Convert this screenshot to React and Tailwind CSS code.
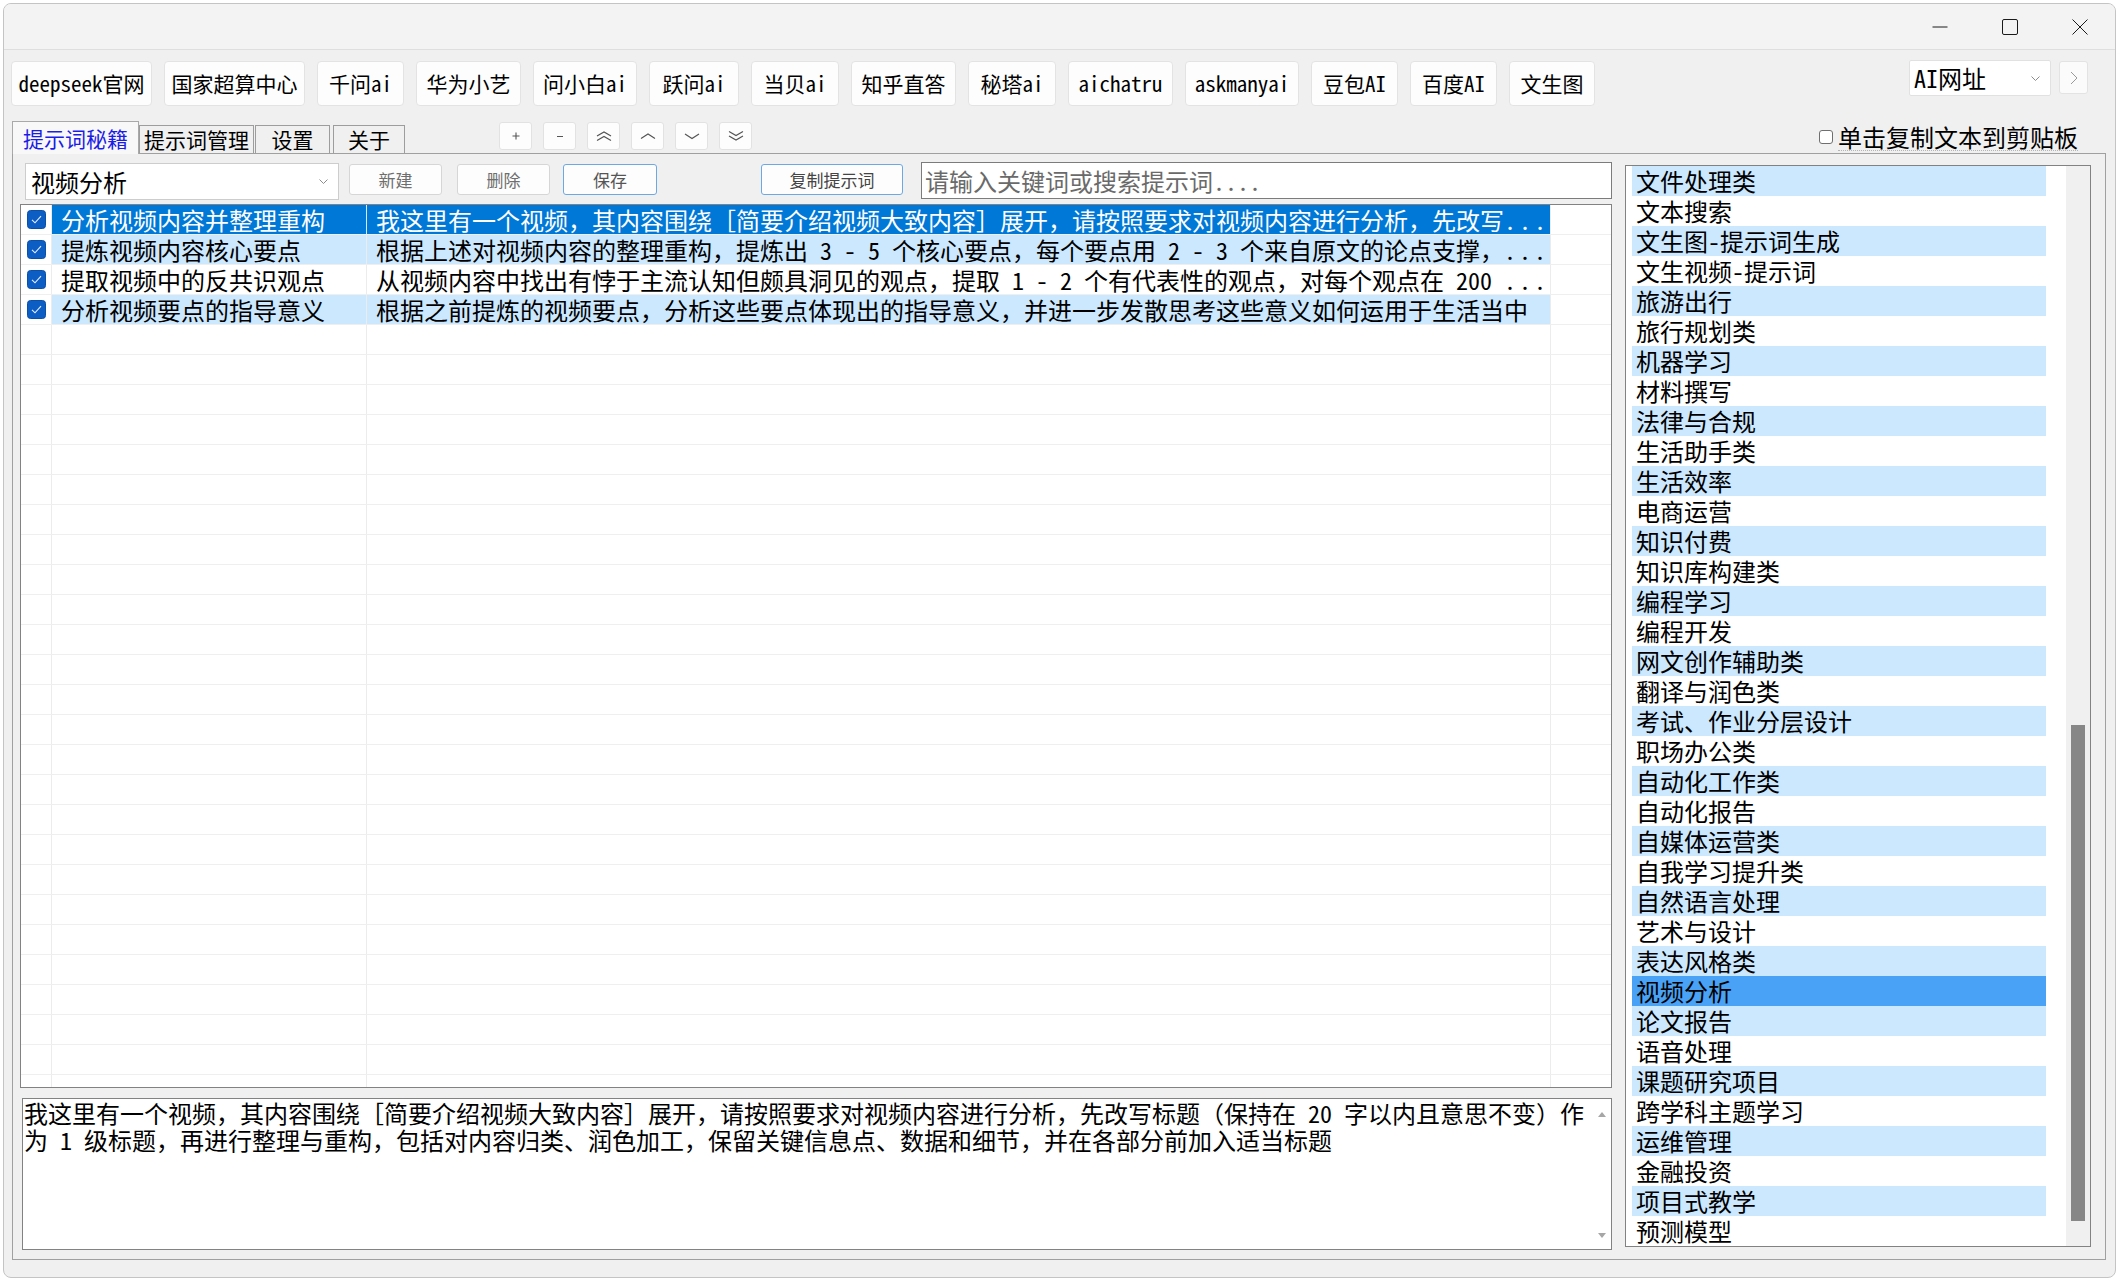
import React from 'react';

const sites = [
    { name: 'deepseek官网', w: 'w-[141px]' },
    { name: '国家超算中心', w: 'w-[141px]' },
    { name: '千问ai', w: 'w-[87px]' },
    { name: '华为小艺', w: 'w-[105px]' },
    { name: '问小白ai', w: 'w-[104px]' },
    { name: '跃问ai', w: 'w-[90px]' },
    { name: '当贝ai', w: 'w-[88px]' },
    { name: '知乎直答', w: 'w-[105px]' },
    { name: '秘塔ai', w: 'w-[88px]' },
    { name: 'aichatru', w: 'w-[105px]' },
    { name: 'askmanyai', w: 'w-[114px]' },
    { name: '豆包AI', w: 'w-[87px]' },
    { name: '百度AI', w: 'w-[87px]' },
    { name: '文生图', w: 'w-[86px]' },
];

const prompts = [
    { title: '分析视频内容并整理重构', body: '我这里有一个视频，其内容围绕［简要介绍视频大致内容］展开，请按照要求对视频内容进行分析，先改写', more: true },
    { title: '提炼视频内容核心要点', body: '根据上述对视频内容的整理重构，提炼出 3 - 5 个核心要点，每个要点用 2 - 3 个来自原文的论点支撑，', more: true },
    { title: '提取视频中的反共识观点', body: '从视频内容中找出有悖于主流认知但颇具洞见的观点，提取 1 - 2 个有代表性的观点，对每个观点在 200 ', more: true },
    { title: '分析视频要点的指导意义', body: '根据之前提炼的视频要点，分析这些要点体现出的指导意义，并进一步发散思考这些意义如何运用于生活当中' },
];

const categories = [
    '文件处理类', '文本搜索', '文生图-提示词生成', '文生视频-提示词', '旅游出行', '旅行规划类',
    '机器学习', '材料撰写', '法律与合规', '生活助手类', '生活效率', '电商运营',
    '知识付费', '知识库构建类', '编程学习', '编程开发', '网文创作辅助类', '翻译与润色类',
    '考试、作业分层设计', '职场办公类', '自动化工作类', '自动化报告', '自媒体运营类', '自我学习提升类',
    '自然语言处理', '艺术与设计', '表达风格类', '视频分析', '论文报告', '语音处理',
    '课题研究项目', '跨学科主题学习', '运维管理', '金融投资', '项目式教学', '预测模型',
];

function SmallChevron() {
    return (
        <svg width="9" height="5" viewBox="0 0 9 5">
            <polyline points="0.5,0.5 4.5,4.5 8.5,0.5" fill="none" stroke="#8c8c8c" strokeWidth="1" />
        </svg>
    );
}

function MoveIcon({ kind }) {
    const line = (pts) => <polyline points={pts} fill="none" stroke="#555" strokeWidth="1.2" />;
    return (
        <svg width="18" height="12" viewBox="0 0 18 12">
            {kind === 'plus' && (
                <>
                    <line x1="5.5" y1="6" x2="12.5" y2="6" stroke="#555" strokeWidth="1.1" />
                    <line x1="9" y1="2.5" x2="9" y2="9.5" stroke="#555" strokeWidth="1.1" />
                </>
            )}
            {kind === 'minus' && <line x1="6" y1="6.5" x2="12" y2="6.5" stroke="#555" strokeWidth="1.1" />}
            {kind === 'top' && (
                <>
                    {line('2,6 9,2 16,6')}
                    {line('2,10.5 9,6.5 16,10.5')}
                </>
            )}
            {kind === 'up' && line('2,8.5 9,4 16,8.5')}
            {kind === 'down' && line('2,4 9,8.5 16,4')}
            {kind === 'bottom' && (
                <>
                    {line('2,1.5 9,5.5 16,1.5')}
                    {line('2,6 9,10 16,6')}
                </>
            )}
        </svg>
    );
}

function RowCheck() {
    return (
        <svg width="19" height="19" viewBox="0 0 19 19">
            <rect x="0.5" y="0.5" width="18" height="18" rx="3" fill="#0c5ec4" stroke="#0a4fa8" />
            <polyline points="5,9.8 8,12.8 14,6.2" fill="none" stroke="#e8f1ff" strokeWidth="1.1" />
        </svg>
    );
}

export default function App() {
    return (
        <div className="w-[2119px] h-[1281px] bg-white p-[3px] font-['Noto_Sans_Mono_CJK_SC','Noto_Sans_CJK_SC',sans-serif] text-black">
            <div className="w-[2113px] h-[1275px] rounded-[8px] border border-[#c4c4c4] bg-[#f0f0f0] overflow-hidden flex flex-col">
                {/* Title bar */}
                <div className="h-[46px] shrink-0 border-b border-[#dedede] bg-[#f3f3f3] flex justify-end">
                    <div className="w-[70px] flex items-center justify-center">
                        <svg width="16" height="16" viewBox="0 0 16 16">
                            <line x1="0.5" y1="8" x2="15.5" y2="8" stroke="#1a1a1a" strokeWidth="1" />
                        </svg>
                    </div>
                    <div className="w-[70px] flex items-center justify-center">
                        <svg width="16" height="16" viewBox="0 0 16 16">
                            <rect x="0.5" y="0.5" width="15" height="15" rx="1.5" fill="none" stroke="#1a1a1a" strokeWidth="1" />
                        </svg>
                    </div>
                    <div className="w-[70px] flex items-center justify-center">
                        <svg width="16" height="16" viewBox="0 0 16 16">
                            <line x1="0.5" y1="0.5" x2="15.5" y2="15.5" stroke="#1a1a1a" strokeWidth="1" />
                            <line x1="15.5" y1="0.5" x2="0.5" y2="15.5" stroke="#1a1a1a" strokeWidth="1" />
                        </svg>
                    </div>
                </div>

                {/* Site buttons */}
                <div className="h-[71px] shrink-0 pt-[11px] pl-[7px] pr-[27px] flex items-start">
                    <div className="flex gap-[12px]">
                        {sites.map((s) => (
                            <div key={s.name} className={`${s.w} h-[45px] rounded-[4px] border border-[#e3e3e3] bg-[#fdfdfd] flex items-center justify-center text-[21px] leading-none whitespace-nowrap`}>
                                {s.name}
                            </div>
                        ))}
                    </div>
                    <div className="ml-auto flex items-start gap-[8px]">
                        <div className="-mt-[1px] w-[142px] h-[36px] rounded-[2px] border border-[#e1e1e1] bg-white flex items-center pl-[4px] pr-[10px]">
                            <span className="text-[24px] leading-none">AI网址</span>
                            <span className="ml-auto"><SmallChevron /></span>
                        </div>
                        <div className="w-[29px] h-[33px] rounded-[3px] border border-[#e3e3e3] bg-[#fbfbfb] flex items-center justify-center">
                            <svg width="8" height="14" viewBox="0 0 8 14">
                                <polyline points="1,1 7,7 1,13" fill="none" stroke="#9a9a9a" strokeWidth="1" />
                            </svg>
                        </div>
                    </div>
                </div>

                {/* Tabs row */}
                <div className="h-[32px] shrink-0 pl-[8px] pr-[37px] flex items-start relative z-10">
                    <div className="w-[127px] h-[33px] border border-b-0 border-[#a9a9a9] bg-[#f8f8f8] flex items-center justify-center text-[21px] leading-none text-[#1c1ce8]">
                        提示词秘籍
                    </div>
                    <div className="mt-[4px] w-[115px] h-[28px] border border-b-0 border-[#9d9d9d] bg-[#f0f0f0] flex items-center justify-center text-[21px] leading-none">
                        提示词管理
                    </div>
                    <div className="mt-[4px] ml-[1px] w-[75px] h-[28px] border border-b-0 border-[#9d9d9d] bg-[#f0f0f0] flex items-center justify-center text-[21px] leading-none">
                        设置
                    </div>
                    <div className="mt-[4px] ml-[3px] w-[72px] h-[28px] border border-b-0 border-[#9d9d9d] bg-[#f0f0f0] flex items-center justify-center text-[21px] leading-none">
                        关于
                    </div>
                    <div className="ml-[94px] mt-[1px] flex gap-[11px]">
                        {['plus', 'minus', 'top', 'up', 'down', 'bottom'].map((k) => (
                            <div key={k} className="w-[33px] h-[28px] rounded-[3px] border border-[#e2e2e2] bg-[#fdfdfd] flex items-center justify-center">
                                <MoveIcon kind={k} />
                            </div>
                        ))}
                    </div>
                    <div className="ml-auto mt-[3px] h-[26px] flex items-center">
                        <div className="w-[14px] h-[14px] rounded-[3px] border border-[#6f6f6f] bg-white" />
                        <span className="ml-[5px] text-[24px] leading-[26px] border-b border-dotted border-[#b5b5b5]">单击复制文本到剪贴板</span>
                    </div>
                </div>

                {/* Tab page */}
                <div className="ml-[8px] w-[2094px] h-[1107px] shrink-0 border border-[#a0a0a0] bg-[#f0f0f0] flex">
                    {/* Left column */}
                    <div className="ml-[7px] w-[1592px] flex flex-col pt-[8px]">
                        <div className="h-[38px] flex items-start">
                            <div className="ml-[5px] mt-[1px] w-[314px] h-[37px] border border-[#cdcdcd] bg-white flex items-center pl-[5px] pr-[10px]">
                                <span className="text-[24px] leading-none">视频分析</span>
                                <span className="ml-auto"><SmallChevron /></span>
                            </div>
                            <div className="ml-[10px] mt-[2px] w-[93px] h-[31px] rounded-[3px] border border-[#d6d6d6] bg-[#fdfdfd] flex items-center justify-center text-[17px] leading-none text-[#6e6e6e]">新建</div>
                            <div className="ml-[15px] mt-[2px] w-[93px] h-[31px] rounded-[3px] border border-[#d6d6d6] bg-[#fdfdfd] flex items-center justify-center text-[17px] leading-none text-[#6e6e6e]">删除</div>
                            <div className="ml-[13px] mt-[2px] w-[94px] h-[31px] rounded-[3px] border border-[#6ea8e4] bg-[#fdfdfd] flex items-center justify-center text-[17px] leading-none text-[#555]">保存</div>
                            <div className="ml-[104px] mt-[2px] w-[142px] h-[31px] rounded-[3px] border border-[#6ea8e4] bg-[#fdfdfd] flex items-center justify-center text-[17px] leading-none text-[#444]">复制提示词</div>
                            <div className="ml-[18px] w-[691px] h-[37px] border border-[#7c7c7c] bg-white flex items-center pl-[3px]">
                                <span className="text-[24px] leading-none text-[#6a6a6a]">请输入关键词或搜索提示词....</span>
                            </div>
                        </div>

                        {/* Prompt table */}
                        <div className="mt-[4px] h-[884px] border border-[#828282] bg-white overflow-hidden">
                            {Array.from({ length: 30 }).map((_, i) => {
                                const p = prompts[i];
                                const sel = i === 0;
                                const hl = i === 1 || i === 3;
                                const cellBg = sel ? 'bg-[#0078d7] text-white' : hl ? 'bg-[#cce8ff]' : 'bg-white';
                                return (
                                    <div key={i} className="h-[30px] flex border-b border-[#efefef]">
                                        <div className="w-[31px] shrink-0 border-r border-[#ececec] flex items-center justify-center">
                                            {p && <RowCheck />}
                                        </div>
                                        <div className={`w-[315px] shrink-0 border-r ${sel ? 'border-[#d7e8f7]' : 'border-[#ececec]'} ${p ? cellBg : 'bg-white'} pl-[9px] text-[24px] leading-[29px] whitespace-nowrap`}>
                                            {p?.title}
                                        </div>
                                        <div className={`w-[1184px] shrink-0 border-r border-[#ececec] ${p ? cellBg : 'bg-white'} pl-[9px] text-[24px] leading-[29px] whitespace-nowrap`}>
                                            {p?.body}
                                            {p?.more && <span className="tracking-[3px]">...</span>}
                                        </div>
                                        <div className="flex-1 bg-white" />
                                    </div>
                                );
                            })}
                        </div>

                        {/* Prompt text */}
                        <div className="mt-[10px] ml-[2px] w-[1590px] h-[152px] border border-[#828282] bg-white flex">
                            <div className="flex-1 pl-[1px] text-[24px] leading-[27px] whitespace-nowrap overflow-hidden">
                                <div>我这里有一个视频，其内容围绕［简要介绍视频大致内容］展开，请按照要求对视频内容进行分析，先改写标题（保持在 20 字以内且意思不变）作</div>
                                <div>为 1 级标题，再进行整理与重构，包括对内容归类、润色加工，保留关键信息点、数据和细节，并在各部分前加入适当标题</div>
                            </div>
                            <div className="w-[19px] flex flex-col items-center justify-between pt-[13px] pb-[11px]">
                                <svg width="8" height="5" viewBox="0 0 8 5"><polygon points="0,5 4,0 8,5" fill="#a6a6a6" /></svg>
                                <svg width="8" height="5" viewBox="0 0 8 5"><polygon points="0,0 4,5 8,0" fill="#a6a6a6" /></svg>
                            </div>
                        </div>
                    </div>

                    {/* Category list */}
                    <div className="ml-[13px] mt-[11px] w-[466px] h-[1082px] border border-[#828282] bg-white flex">
                        <div className="w-[440px] pl-[6px] overflow-hidden">
                            {categories.map((c, i) => {
                                const bg = c === '视频分析' ? 'bg-[#49a2f6]' : i % 2 === 0 ? 'bg-[#cce8ff]' : 'bg-white';
                                return (
                                    <div key={c} className={`w-[414px] h-[30px] pl-[4px] ${bg} text-[24px] leading-[30px] whitespace-nowrap`}>
                                        {c}
                                    </div>
                                );
                            })}
                        </div>
                        <div className="flex-1 bg-[#f0f0f0] flex flex-col">
                            <div className="mt-[559px] ml-[5px] w-[14px] h-[496px] bg-[#878787]" />
                        </div>
                    </div>
                </div>
            </div>
        </div>
    );
}
